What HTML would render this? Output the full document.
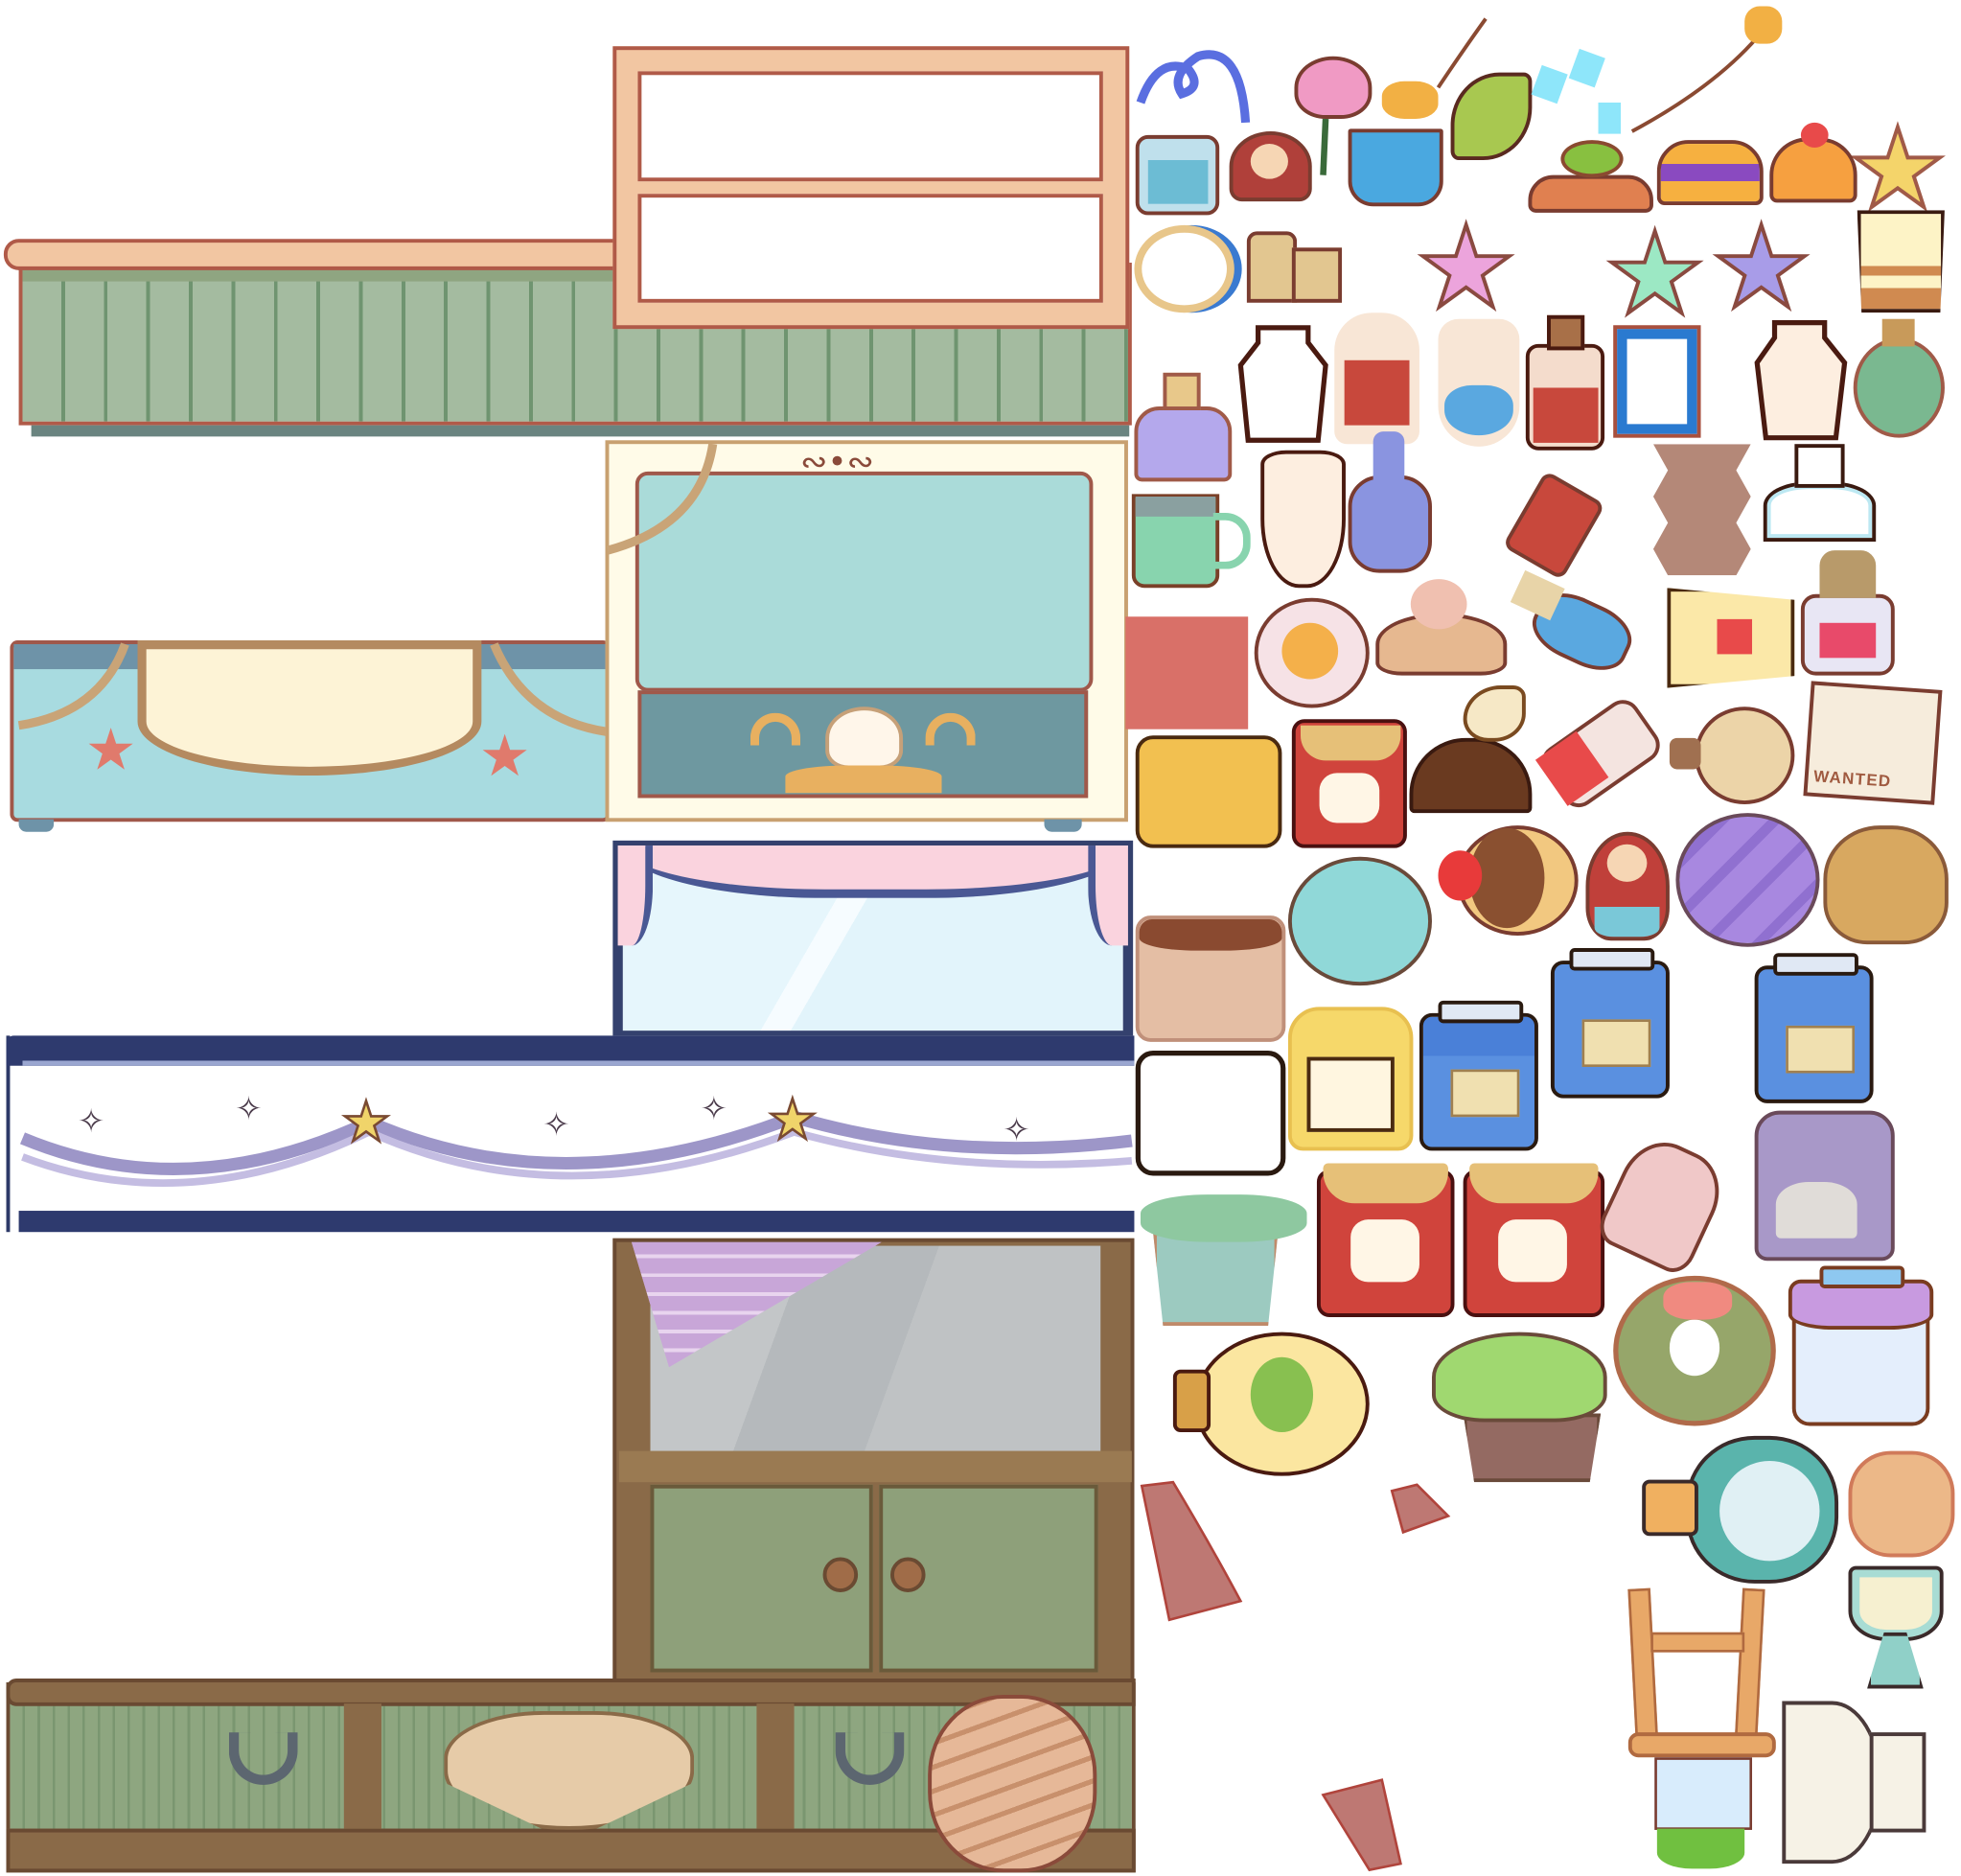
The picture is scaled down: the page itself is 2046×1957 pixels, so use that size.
<!DOCTYPE html>
<html><head><meta charset="utf-8"><style>
html,body{margin:0;padding:0;background:#fff;overflow:hidden}
#w{position:absolute;left:0;top:0;width:1568px;height:1500px;transform:scale(1.3048);transform-origin:0 0}
.b{position:absolute;box-sizing:border-box;border:3px solid #7a3c30}
.n{position:absolute;box-sizing:border-box}
svg{position:absolute;overflow:visible}
</style></head><body><div id="w">

<!-- counter 1 -->
<div class="b" style="left:15px;top:210px;width:890px;height:130px;background:repeating-linear-gradient(90deg,#a4bba0 0 31px,#6f9470 31px 34px);border-color:#b05a48"></div>
<div class="n" style="left:18px;top:213px;width:884px;height:12px;background:#8fa581"></div>
<div class="n" style="left:25px;top:340px;width:878px;height:9px;background:#6a8480"></div>
<div class="b" style="left:3px;top:191px;width:495px;height:25px;background:#f2c6a2;border-radius:12px 0 0 12px;border-color:#b05a48"></div>
<!-- window frame -->
<div class="b" style="left:490px;top:37px;width:413px;height:226px;background:#f2c6a2;border-color:#b05a48"></div>
<div class="b" style="left:510px;top:57px;width:372px;height:88px;background:#fff;border-color:#b05a48"></div>
<div class="b" style="left:510px;top:155px;width:372px;height:87px;background:#fff;border-color:#b05a48"></div>

<!-- blue counter -->
<div class="b" style="left:8px;top:512px;width:480px;height:145px;background:#a8dbe0;border-color:#a0584a;border-radius:6px"></div>
<div class="n" style="left:11px;top:515px;width:475px;height:20px;background:#6e93a8"></div>
<div class="n" style="left:15px;top:655px;width:28px;height:10px;background:#6e93a8;border-radius:0 0 6px 6px"></div>
<div class="b" style="left:110px;top:512px;width:275px;height:108px;background:#fdf3d6;border-color:#b48a60;border-radius:0 0 50% 50%/0 0 40% 40%;border-width:7px"></div>
<svg style="left:0;top:0" width="1" height="1"><path d="M15 580 Q80 570 100 515" stroke="#c9a477" stroke-width="7" fill="none"/><path d="M395 515 Q420 575 485 585" stroke="#c9a477" stroke-width="7" fill="none"/><text x="68" y="615" font-size="46" fill="#e07a6c" font-family="DejaVu Sans">★</text><text x="383" y="620" font-size="46" fill="#e07a6c" font-family="DejaVu Sans">★</text></svg>
<!-- cream frame -->
<div class="b" style="left:484px;top:352px;width:418px;height:305px;background:#fffbe8;border-color:#c8a070"></div>
<div class="b" style="left:508px;top:377px;width:366px;height:176px;background:#aadbd9;border-color:#a0584a;border-radius:10px"></div>
<div class="b" style="left:510px;top:552px;width:360px;height:86px;background:#6e98a0;border-color:#a0584a"></div>
<div class="n" style="left:660px;top:565px;width:62px;height:50px;background:#fff6ea;border-radius:50% 50% 30% 30%;border:3px solid #c6a078"></div>
<div class="n" style="left:600px;top:570px;width:40px;height:26px;border:7px solid #e8b060;border-bottom:none;border-radius:30px 30px 0 0"></div>
<div class="n" style="left:740px;top:570px;width:40px;height:26px;border:7px solid #e8b060;border-bottom:none;border-radius:30px 30px 0 0"></div>
<div class="n" style="left:628px;top:612px;width:125px;height:22px;background:#e8b060;border-radius:40% 40% 0 0"></div>
<div class="n" style="left:835px;top:655px;width:30px;height:10px;background:#6e93a8;border-radius:0 0 6px 6px"></div>
<svg style="left:0;top:0" width="1" height="1"><path d="M486 440 Q560 420 570 355" stroke="#c9a477" stroke-width="7" fill="none"/><text x="640" y="378" font-size="26" fill="#8a4a3a" font-family="DejaVu Sans">∾•∾</text></svg>

<!-- pink curtain window -->
<div class="b" style="left:490px;top:672px;width:416px;height:160px;background:linear-gradient(120deg,#e6f6fc 0 40%,#f6fcff 40% 45%,#e2f4fb 45%);border-color:#34416e;border-width:8px"></div>
<div class="n" style="left:498px;top:676px;width:404px;height:42px;background:#fad3de;border-radius:0 0 40% 40%/0 0 100% 100%;border-bottom:7px solid #4a5894"></div>
<div class="n" style="left:494px;top:676px;width:28px;height:80px;background:#fad3de;border-radius:0 0 60% 0;border-right:6px solid #4a5894"></div>
<div class="n" style="left:870px;top:676px;width:32px;height:80px;background:#fad3de;border-radius:0 0 0 60%;border-left:6px solid #4a5894"></div>

<!-- navy shelf -->
<div class="n" style="left:5px;top:828px;width:902px;height:157px;background:#fff;border-left:3px solid #2d3968"></div>
<div class="n" style="left:5px;top:828px;width:902px;height:24px;background:#2e3a6e;border-radius:6px 0 0 0"></div>
<div class="n" style="left:18px;top:848px;width:889px;height:4px;background:#9aa6d0"></div>
<div class="n" style="left:15px;top:968px;width:892px;height:17px;background:#2e3a6e"></div>
<svg style="left:0;top:0" width="1" height="1"><path d="M18 910 Q150 965 295 897 Q450 965 635 893 Q760 930 905 912" stroke="#9d96c8" stroke-width="10" fill="none"/><path d="M18 925 Q150 975 295 905 Q450 975 635 905 Q760 940 905 928" stroke="#c4bde2" stroke-width="6" fill="none"/><text x="273" y="912" font-size="44" fill="#f0d46a" stroke="#7a4a32" stroke-width="2" font-family="DejaVu Sans">★</text><text x="614" y="910" font-size="44" fill="#f0d46a" stroke="#7a4a32" stroke-width="2" font-family="DejaVu Sans">★</text><g font-size="26" fill="#4a3a4a" font-family="DejaVu Sans"><text x="62" y="905">✧</text><text x="188" y="895">✧</text><text x="434" y="908">✧</text><text x="560" y="895">✧</text><text x="802" y="912">✧</text></g></svg>

<!-- wooden cabinet -->
<div class="b" style="left:490px;top:990px;width:417px;height:360px;background:#8a6a48;border-color:#6a4a32"></div>
<div class="n" style="left:520px;top:996px;width:360px;height:165px;background:linear-gradient(110deg,#c3c6c8 0 30%,#b5b9bc 30% 55%,#bfc2c4 55%)"></div>
<div class="n" style="left:505px;top:993px;width:200px;height:100px;background:repeating-linear-gradient(0deg,#c8a6d8 0 12px,#e8d4ee 12px 15px),#c8a6d8;clip-path:polygon(0 0,100% 0,15% 100%)"></div>
<div class="n" style="left:495px;top:1160px;width:410px;height:25px;background:#9a7a52"></div>
<div class="b" style="left:520px;top:1187px;width:178px;height:150px;background:#8ea07a;border-color:#6a5a3a"></div>
<div class="b" style="left:703px;top:1187px;width:175px;height:150px;background:#8ea07a;border-color:#6a5a3a"></div>
<div class="n" style="left:658px;top:1245px;width:28px;height:28px;border-radius:50%;background:#a06c48;border:3px solid #6a4a32"></div>
<div class="n" style="left:712px;top:1245px;width:28px;height:28px;border-radius:50%;background:#a06c48;border:3px solid #6a4a32"></div>

<!-- drawer counter -->
<div class="b" style="left:5px;top:1345px;width:903px;height:152px;background:repeating-linear-gradient(90deg,#8ea680 0 10px,#7a9670 10px 12px);border-color:#6a4a32"></div>
<div class="n" style="left:5px;top:1342px;width:903px;height:22px;background:#8a6a48;border:3px solid #6a4a32;border-radius:8px 0 0 8px;box-sizing:border-box"></div>
<div class="n" style="left:5px;top:1462px;width:903px;height:35px;background:#8a6a48;border:3px solid #6a4a32;box-sizing:border-box"></div>
<div class="n" style="left:275px;top:1362px;width:30px;height:100px;background:#8a6a48"></div>
<div class="n" style="left:605px;top:1362px;width:30px;height:100px;background:#8a6a48"></div>
<div class="n" style="left:183px;top:1385px;width:55px;height:42px;border:8px solid #5c6670;border-top:none;border-radius:0 0 28px 28px"></div>
<div class="n" style="left:668px;top:1385px;width:55px;height:42px;border:8px solid #5c6670;border-top:none;border-radius:0 0 28px 28px"></div>
<div class="n" style="left:355px;top:1368px;width:200px;height:95px;background:#e6cba8;border:3px solid #8a6a48;border-radius:40% 40% 50% 50%;clip-path:polygon(0 0,100% 0,100% 60%,60% 100%,40% 100%,0 60%)"></div>
<div class="n" style="left:742px;top:1355px;width:135px;height:142px;background:repeating-linear-gradient(160deg,#e6b898 0 14px,#c8906c 14px 18px);border:3px solid #8a4a3a;border-radius:45%"></div>

<!-- red rect -->
<div class="n" style="left:900px;top:493px;width:98px;height:90px;background:#d97068"></div>

<!-- small items row 1 -->
<svg style="left:0;top:0" width="1" height="1">
<path d="M912 82 Q925 45 950 55 Q962 70 945 75 Q935 60 958 45 Q992 35 996 98" stroke="#5a6ee0" stroke-width="7" fill="none"/>
<path d="M1060 95 L1058 140" stroke="#3a6a3a" stroke-width="5"/>
<path d="M1150 70 Q1170 40 1188 15" stroke="#8a4a32" stroke-width="3" fill="none"/>
<path d="M1305 105 Q1370 70 1405 30" stroke="#8a4a32" stroke-width="3" fill="none"/>
<text x="1478" y="165" font-size="88" fill="#f4d46a" stroke="#a05a48" stroke-width="3" font-family="DejaVu Sans">★</text>
<text x="1132" y="245" font-size="90" fill="#eca4dc" stroke="#8a4a40" stroke-width="3" font-family="DejaVu Sans">★</text>
<text x="1283" y="250" font-size="90" fill="#9ce8c4" stroke="#8a4a40" stroke-width="3" font-family="DejaVu Sans">★</text>
<text x="1368" y="245" font-size="90" fill="#a89ce8" stroke="#8a4a40" stroke-width="3" font-family="DejaVu Sans">★</text>
<path d="M1006 262 H1046 V274 L1060 292 L1054 352 H998 L992 292 L1006 274 Z" fill="#fff" stroke="#4a1a10" stroke-width="4"/>
<path d="M1419 258 H1459 V270 L1475 290 L1468 350 H1412 L1405 290 L1419 270 Z" fill="#fdeee0" stroke="#4a1a10" stroke-width="4"/>
</svg>
<div class="b" style="left:908px;top:108px;width:67px;height:64px;background:#bfe0ec;border-radius:10px"></div>
<div class="n" style="left:918px;top:128px;width:48px;height:35px;background:#6cbcd4"></div>
<div class="b" style="left:983px;top:105px;width:66px;height:56px;background:#b0403a;border-radius:50% 50% 10px 10px"></div>
<div class="n" style="left:1000px;top:115px;width:30px;height:28px;background:#f6d6b4;border-radius:50%"></div>
<div class="b" style="left:1035px;top:45px;width:62px;height:50px;background:#f09ac4;border-radius:50% 50% 40% 40%"></div>
<div class="b" style="left:1078px;top:103px;width:76px;height:62px;background:#4aa8e0;border-radius:2px 2px 20px 20px"></div>
<div class="n" style="left:1105px;top:65px;width:45px;height:30px;background:#f2b044;border-radius:40%"></div>
<div class="b" style="left:1160px;top:58px;width:65px;height:70px;background:#a8c850;border-radius:60% 10% 60% 10%;border-color:#5a2a20"></div>
<div class="n" style="left:1228px;top:55px;width:22px;height:25px;background:#8ee6fa;transform:rotate(20deg)"></div>
<div class="n" style="left:1258px;top:42px;width:22px;height:25px;background:#8ee6fa;transform:rotate(20deg)"></div>
<div class="n" style="left:1278px;top:82px;width:18px;height:25px;background:#8ee6fa"></div>
<div class="n" style="left:1395px;top:5px;width:30px;height:30px;background:#f2b044;border-radius:40%"></div>
<div class="b" style="left:1222px;top:140px;width:100px;height:30px;background:#e08050;border-radius:20px 20px 6px 6px"></div>
<div class="n" style="left:1248px;top:112px;width:50px;height:30px;background:#88c040;border-radius:50%;border:3px solid #8a4a30"></div>
<div class="b" style="left:1325px;top:112px;width:85px;height:52px;background:linear-gradient(#f6b040 0 35%,#8a4ac0 35% 65%,#f6b040 65%);border-radius:25px 25px 6px 6px"></div>
<div class="b" style="left:1415px;top:110px;width:70px;height:52px;background:#f6a040;border-radius:30px 30px 6px 6px"></div>
<div class="n" style="left:1440px;top:98px;width:22px;height:20px;background:#e84a4a;border-radius:50%"></div>
<!-- row 2 -->
<div class="b" style="left:907px;top:180px;width:80px;height:70px;background:#fff;border-color:#e8c68a;border-width:6px;border-radius:50%;box-shadow:6px 0 0 #3a7ad0"></div>
<div class="b" style="left:997px;top:185px;width:40px;height:57px;background:#e2c690;border-radius:8px 8px 0 0"></div>
<div class="b" style="left:1033px;top:198px;width:40px;height:44px;background:#e2c690"></div>
<div class="b" style="left:1485px;top:168px;width:70px;height:82px;background:linear-gradient(#fdf3c6 0 55%,#d08a50 55% 65%,#fdf3c6 65% 78%,#d08a50 78%);border-color:#3a1a10;clip-path:polygon(0 0,100% 0,95% 100%,5% 100%)"></div>
<!-- row 3 -->
<div class="n" style="left:1067px;top:250px;width:68px;height:105px;background:#f8e6d6;border-radius:30px 30px 10px 10px"></div>
<div class="n" style="left:1075px;top:288px;width:52px;height:52px;background:#c8483c"></div>
<div class="n" style="left:1150px;top:255px;width:65px;height:102px;background:#f8e6d6;border-radius:20px 20px 40px 40px"></div>
<div class="n" style="left:1155px;top:308px;width:55px;height:40px;background:#5aa8e0;border-radius:40% 40% 50% 50%"></div>
<div class="b" style="left:1220px;top:275px;width:63px;height:85px;background:#f4dccc;border-color:#4a1a10;border-radius:10px"></div>
<div class="n" style="left:1237px;top:252px;width:30px;height:28px;background:#a87048;border:3px solid #4a1a10"></div>
<div class="n" style="left:1226px;top:310px;width:52px;height:44px;background:#c8483c"></div>
<div class="b" style="left:1290px;top:260px;width:70px;height:90px;background:#fff;border-color:#a8503e;box-shadow:inset 0 0 0 8px #2a7ad0"></div>
<div class="b" style="left:1482px;top:270px;width:73px;height:80px;background:#7ab890;border-radius:50%;border-color:#a05a48"></div>
<div class="n" style="left:1505px;top:255px;width:26px;height:22px;background:#c89a5a"></div>
<!-- row 4 -->
<div class="b" style="left:907px;top:325px;width:78px;height:60px;background:#b4a8ec;border-radius:20px 20px 6px 6px;border-color:#a05a48"></div>
<div class="n" style="left:930px;top:298px;width:30px;height:30px;background:#e8c88a;border:3px solid #a05a48"></div>
<div class="b" style="left:905px;top:395px;width:70px;height:75px;background:#88d4ae;border-color:#7a4028;border-radius:0 0 10px 10px"></div>
<div class="n" style="left:908px;top:397px;width:64px;height:16px;background:#8aa0a0"></div>
<div class="n" style="left:970px;top:410px;width:30px;height:45px;border:6px solid #88d4ae;border-radius:0 20px 20px 0;border-left:none"></div>
<div class="b" style="left:1008px;top:360px;width:68px;height:110px;background:#fdeee0;border-color:#4a1a10;border-radius:30% 30% 45% 45%/10% 10% 50% 50%"></div>
<div class="b" style="left:1078px;top:380px;width:67px;height:78px;background:#8a94e0;border-radius:25px"></div>
<div class="n" style="left:1098px;top:345px;width:25px;height:40px;background:#8a94e0;border-radius:8px 8px 0 0"></div>
<div class="b" style="left:1215px;top:385px;width:55px;height:70px;background:#c8483c;transform:rotate(30deg);border-radius:8px"></div>
<div class="n" style="left:1322px;top:355px;width:78px;height:105px;background:#b48878;clip-path:polygon(0 0,100% 0,85% 20%,100% 40%,85% 60%,100% 80%,85% 100%,15% 100%,0 80%,15% 60%,0 40%,15% 20%)"></div>
<div class="b" style="left:1410px;top:385px;width:90px;height:48px;background:#fff;border-color:#3a1a10;border-radius:40% 40% 0 0;box-shadow:inset 0 0 0 3px #bce8f2"></div>
<div class="b" style="left:1435px;top:355px;width:40px;height:35px;background:#fff;border-color:#3a1a10"></div>
<!-- row 5 -->
<div class="b" style="left:1003px;top:478px;width:92px;height:88px;background:#f6e2e6;border-radius:50%;border-color:#7a3c30"></div>
<div class="n" style="left:1025px;top:498px;width:45px;height:45px;background:#f4b04a;border-radius:50%"></div>
<div class="b" style="left:1100px;top:490px;width:105px;height:50px;background:#e6b890;border-radius:50% 50% 20% 20%"></div>
<div class="n" style="left:1128px;top:463px;width:45px;height:40px;background:#f0c0b0;border-radius:50%"></div>
<div class="b" style="left:1225px;top:480px;width:80px;height:50px;background:#5aa8e0;border-radius:40%;transform:rotate(25deg)"></div>
<div class="n" style="left:1212px;top:462px;width:35px;height:28px;background:#e8d4a8;transform:rotate(25deg)"></div>
<div class="b" style="left:1333px;top:470px;width:102px;height:80px;background:#fbe8a8;border-color:#4a2a10;clip-path:polygon(0 0,100% 12%,100% 88%,0 100%)"></div>
<div class="n" style="left:1373px;top:495px;width:28px;height:28px;background:#e84a4a"></div>
<div class="b" style="left:1440px;top:475px;width:75px;height:65px;background:#e8e6f4;border-radius:12px"></div>
<div class="n" style="left:1455px;top:498px;width:45px;height:28px;background:#e84a6a"></div>
<div class="n" style="left:1455px;top:440px;width:45px;height:38px;background:#b89a6a;border-radius:12px 12px 0 0"></div>
<!-- row 6 -->
<div class="b" style="left:908px;top:588px;width:117px;height:90px;background:#f2c050;border-color:#4a2a10;border-radius:14px"></div>
<div class="b" style="left:1033px;top:575px;width:92px;height:103px;background:#d0443c;border-color:#4a1010;border-radius:10px"></div>
<div class="n" style="left:1040px;top:580px;width:80px;height:28px;background:#e6c078;border-radius:0 0 20px 20px"></div>
<div class="n" style="left:1055px;top:618px;width:48px;height:40px;background:#fff6e6;border-radius:14px"></div>
<div class="b" style="left:1127px;top:590px;width:98px;height:60px;background:#6a3a20;border-radius:45px 45px 4px 4px;border-color:#3a1a10"></div>
<div class="n" style="left:1170px;top:548px;width:50px;height:45px;background:#f6e8c6;border-radius:60% 20% 50% 40%;border:3px solid #7a4a20"></div>
<div class="b" style="left:1235px;top:575px;width:90px;height:55px;background:#f4e4e0;border-radius:14px;transform:rotate(-35deg)"></div>
<div class="n" style="left:1237px;top:592px;width:40px;height:45px;background:#e84a4a;transform:rotate(-35deg)"></div>
<div class="b" style="left:1355px;top:565px;width:80px;height:78px;background:#ecd4a8;border-radius:50%"></div>
<div class="n" style="left:1335px;top:590px;width:25px;height:25px;background:#a07050;border-radius:6px"></div>
<div class="b" style="left:1445px;top:548px;width:105px;height:92px;background:#f6ecdc;transform:rotate(4deg)"></div>
<div class="n" style="left:1450px;top:616px;width:95px;height:20px;font:bold 13px 'Liberation Sans',sans-serif;color:#a05a40;letter-spacing:1px;transform:rotate(4deg)">WANTED</div>
<!-- row 7 -->
<div class="b" style="left:1030px;top:685px;width:115px;height:103px;background:#90d8d8;border-radius:50%;border-color:#6a4a3a"></div>
<div class="b" style="left:1165px;top:660px;width:97px;height:88px;background:#f2c880;border-radius:50%"></div>
<div class="n" style="left:1175px;top:662px;width:60px;height:80px;background:#8a5030;border-radius:50%"></div>
<div class="n" style="left:1150px;top:680px;width:35px;height:40px;background:#e83a3a;border-radius:50%"></div>
<div class="b" style="left:1268px;top:665px;width:67px;height:87px;background:#c0403a;border-radius:50% 50% 30% 30%"></div>
<div class="n" style="left:1285px;top:675px;width:32px;height:30px;background:#f6d6b4;border-radius:50%"></div>
<div class="n" style="left:1275px;top:725px;width:52px;height:24px;background:#7ac8d8;border-radius:0 0 30% 30%"></div>
<div class="b" style="left:1340px;top:650px;width:115px;height:107px;background:repeating-linear-gradient(135deg,#a888e0 0 22px,#9070d0 22px 30px);border-radius:50%;border-color:#6a4a5a"></div>
<div class="b" style="left:1458px;top:660px;width:100px;height:95px;background:#d8a860;border-radius:45% 45% 35% 35%;border-color:#8a5a3a"></div>
<!-- row 8 -->
<div class="b" style="left:908px;top:732px;width:120px;height:101px;background:#e4bea4;border-radius:12px;border-color:#c0907a"></div>
<div class="n" style="left:911px;top:735px;width:114px;height:25px;background:#8a4a30;border-radius:10px 10px 40% 40%"></div>
<div class="b" style="left:908px;top:840px;width:120px;height:100px;background:#fff;border-color:#2a1a10;border-radius:14px;border-width:4px"></div>
<div class="b" style="left:1030px;top:805px;width:100px;height:115px;background:#f6d86a;border-radius:25px 25px 12px 12px;border-color:#e8c050"></div>
<div class="b" style="left:1045px;top:845px;width:70px;height:60px;background:#fff6e0;border-color:#4a2a10"></div>
<div class="b" style="left:1135px;top:810px;width:95px;height:110px;background:linear-gradient(#4a80d8 0 30%,#5a90e0 30%);border-color:#2a1a10;border-radius:10px"></div>
<div class="n" style="left:1150px;top:800px;width:68px;height:18px;background:#e0e8f4;border:3px solid #2a1a10;border-radius:4px"></div>
<div class="b" style="left:1240px;top:768px;width:95px;height:110px;background:#5a90e0;border-color:#2a1a10;border-radius:10px"></div>
<div class="n" style="left:1255px;top:758px;width:68px;height:18px;background:#e0e8f4;border:3px solid #2a1a10;border-radius:4px"></div>
<div class="b" style="left:1403px;top:772px;width:95px;height:110px;background:#5a90e0;border-color:#2a1a10;border-radius:10px"></div>
<div class="n" style="left:1418px;top:762px;width:68px;height:18px;background:#e0e8f4;border:3px solid #2a1a10;border-radius:4px"></div>
<div class="n" style="left:1160px;top:855px;width:55px;height:38px;background:#f0e0b0;border:2px solid #a08050"></div>
<div class="n" style="left:1265px;top:815px;width:55px;height:38px;background:#f0e0b0;border:2px solid #a08050"></div>
<div class="n" style="left:1428px;top:820px;width:55px;height:38px;background:#f0e0b0;border:2px solid #a08050"></div>
<!-- row 9 -->
<div class="b" style="left:922px;top:985px;width:100px;height:75px;background:#9ccac0;border-color:#c08a6a;clip-path:polygon(0 0,100% 0,92% 100%,8% 100%)"></div>
<div class="n" style="left:912px;top:955px;width:133px;height:38px;background:#8ec8a0;border-radius:40%"></div>
<div class="b" style="left:1053px;top:935px;width:110px;height:118px;background:#d0443c;border-color:#4a1010;border-radius:10px"></div>
<div class="n" style="left:1058px;top:930px;width:100px;height:32px;background:#e6c078;border-radius:4px 4px 25px 25px"></div>
<div class="n" style="left:1080px;top:975px;width:55px;height:50px;background:#fff6e6;border-radius:14px"></div>
<div class="b" style="left:1170px;top:935px;width:113px;height:118px;background:#d0443c;border-color:#4a1010;border-radius:10px"></div>
<div class="n" style="left:1175px;top:930px;width:103px;height:32px;background:#e6c078;border-radius:4px 4px 25px 25px"></div>
<div class="n" style="left:1198px;top:975px;width:55px;height:50px;background:#fff6e6;border-radius:14px"></div>
<div class="b" style="left:1290px;top:915px;width:80px;height:95px;background:#f0c8c8;border-radius:40% 40% 20% 20%;transform:rotate(25deg)"></div>
<div class="b" style="left:1403px;top:888px;width:112px;height:120px;background:#a898c8;border-radius:20px 20px 10px 10px;border-color:#6a4a5a"></div>
<div class="n" style="left:1420px;top:945px;width:65px;height:45px;background:#e0dcd8;border-radius:40% 40% 4px 4px"></div>
<!-- row 10 -->
<div class="b" style="left:1290px;top:1020px;width:130px;height:120px;background:#96a66a;border-radius:50%;border-color:#b06a4a;border-width:4px"></div>
<div class="n" style="left:1335px;top:1055px;width:40px;height:45px;background:#fff;border-radius:50%"></div>
<div class="n" style="left:1330px;top:1025px;width:55px;height:30px;background:#f08a80;border-radius:40%"></div>
<div class="b" style="left:1433px;top:1035px;width:110px;height:105px;background:#e4eefc;border-color:#7a3c20;border-radius:14px"></div>
<div class="n" style="left:1430px;top:1023px;width:116px;height:40px;background:#c89ae0;border:3px solid #7a3c20;border-radius:10px 10px 30% 30%"></div>
<div class="n" style="left:1455px;top:1012px;width:68px;height:18px;background:#8ec8f0;border:3px solid #7a3c20;border-radius:4px"></div>
<div class="b" style="left:955px;top:1065px;width:140px;height:115px;background:#fbe6a0;border-radius:50%;border-color:#4a1a10"></div>
<div class="n" style="left:938px;top:1095px;width:30px;height:50px;background:#d8a048;border:3px solid #4a1a10;border-radius:6px"></div>
<div class="n" style="left:1000px;top:1085px;width:50px;height:60px;background:#88c050;border-radius:50%"></div>
<div class="b" style="left:1170px;top:1130px;width:110px;height:55px;background:#946a62;border-color:#6a4a3a;clip-path:polygon(0 0,100% 0,92% 100%,8% 100%)"></div>
<div class="n" style="left:1145px;top:1065px;width:140px;height:72px;background:#a0d870;border-radius:50% 50% 30% 30%;border:3px solid #6a4a3a"></div>
<!-- shards -->
<svg style="left:0;top:0" width="1" height="1">
<path d="M913 1188 L938 1185 Q968 1235 992 1280 L935 1295 Z" fill="#be7873" stroke="#b0443c" stroke-width="2"/>
<path d="M1113 1192 L1133 1187 L1158 1212 L1122 1225 Z" fill="#be7873" stroke="#b0443c" stroke-width="2"/>
<path d="M1058 1435 L1105 1423 L1120 1490 L1095 1495 Z" fill="#be7873" stroke="#b0443c" stroke-width="2"/>
</svg>
<!-- bottom right -->
<div class="b" style="left:1348px;top:1148px;width:122px;height:118px;background:#5ab4ac;border-radius:45%;border-color:#3a2a2a"></div>
<div class="n" style="left:1375px;top:1168px;width:80px;height:80px;background:#e0f0f4;border-radius:50%"></div>
<div class="n" style="left:1313px;top:1183px;width:45px;height:45px;background:#f0b060;border:3px solid #3a2a2a;border-radius:6px"></div>
<div class="b" style="left:1478px;top:1160px;width:85px;height:85px;background:#ecb888;border-radius:40%;border-color:#d07a5a"></div>
<div class="b" style="left:1478px;top:1252px;width:76px;height:60px;background:#f6f0d0;border-color:#3a2a2a;border-radius:6px 6px 40% 40%;box-shadow:inset 0 0 0 6px #a8dcd4"></div>
<div class="b" style="left:1493px;top:1305px;width:45px;height:45px;background:#90d0c8;border-color:#3a2a2a;clip-path:polygon(30% 0,70% 0,100% 100%,0 100%)"></div>
<div class="n" style="left:1305px;top:1270px;width:18px;height:130px;background:#e8a868;border:2px solid #b06a40;transform:rotate(-3deg)"></div>
<div class="n" style="left:1390px;top:1270px;width:18px;height:130px;background:#e8a868;border:2px solid #b06a40;transform:rotate(3deg)"></div>
<div class="n" style="left:1320px;top:1305px;width:75px;height:16px;background:#e8a868;border:2px solid #b06a40"></div>
<div class="n" style="left:1302px;top:1385px;width:118px;height:20px;background:#e8a868;border:3px solid #b06a40;border-radius:8px"></div>
<div class="n" style="left:1323px;top:1405px;width:78px;height:58px;background:#d8ecfc;border:2px solid #7a3c30"></div>
<div class="n" style="left:1325px;top:1462px;width:70px;height:32px;background:#70c040;border-radius:0 0 40% 40%"></div>
<div class="b" style="left:1425px;top:1360px;width:80px;height:130px;background:#f6f2e6;border-color:#4a3a3a;border-radius:0 60% 60% 0"></div>
<div class="b" style="left:1495px;top:1385px;width:45px;height:80px;background:#f6f2e6;border-color:#4a3a3a"></div>

</div></body></html>
